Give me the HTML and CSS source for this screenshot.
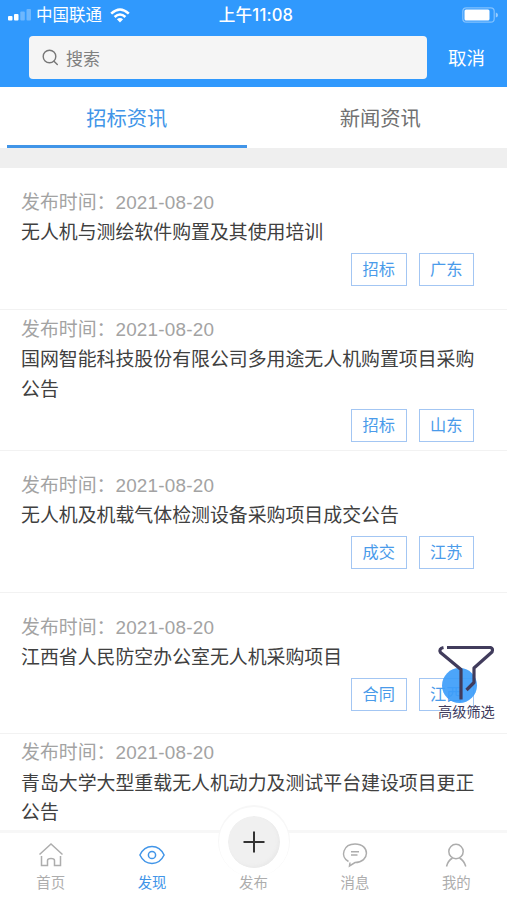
FILE: index.html
```html
<!DOCTYPE html>
<html lang="zh-CN">
<head>
  <meta charset="UTF-8">
  <meta name="viewport" content="width=device-width, initial-scale=1.0">
  <title>招标资讯</title>
  <link rel="stylesheet" href="styles.css">
</head>
<body>
  <div class="app">
    <header class="header">
      <!-- Status bar -->
      <div class="status">
        <div class="status-left">
          <svg class="signal" width="24" height="12" viewBox="0 0 24 12" fill="#fff">
            <rect x="0" y="7" width="4.5" height="4.5" rx="1"/>
            <rect x="6" y="5" width="4.5" height="6.5" rx="1"/>
            <rect x="12.3" y="2.5" width="4.5" height="9" rx="1" opacity=".3"/>
            <rect x="18.5" y="0" width="4.5" height="11.5" rx="1" opacity=".3"/>
          </svg>
          <span class="carrier">中国联通</span>
          <svg class="wifi" width="20" height="15" viewBox="0 0 20 15" fill="none" stroke="#fff" stroke-width="2.6">
            <path d="M1.2 5.6Q10-2.6 18.8 5.6"/>
            <path d="M4.6 9Q10 4 15.4 9"/>
            <path d="M10 14.4L6.9 11.2Q10 8.6 13.1 11.2Z" fill="#fff" stroke="none"/>
          </svg>
        </div>
        <div class="clock">上午11:08</div>
        <svg class="battery" width="37" height="16" viewBox="0 0 37 16">
          <rect x=".8" y=".8" width="31.4" height="14.4" rx="3.5" fill="none" stroke="#fff" stroke-opacity=".4" stroke-width="1.2"/>
          <rect x="2.5" y="2.5" width="25" height="11" rx="1.5" fill="#fff"/>
          <path d="M33.8 5.5Q36 6 36 8T33.8 10.5Z" fill="#fff" opacity=".5"/>
        </svg>
      </div>
      <!-- Search -->
      <div class="search-row">
        <div class="search">
          <svg width="17" height="17" viewBox="0 0 17 17" fill="none" stroke="#777" stroke-width="1.4" stroke-linecap="round">
            <circle cx="7.5" cy="7.5" r="6.3"/>
            <path d="M12 12.2L15.3 15.5"/>
          </svg>
          <span>搜索</span>
        </div>
        <span class="cancel">取消</span>
      </div>
    </header>

    <nav class="tabs">
      <div class="tab active">招标资讯</div>
      <div class="tab">新闻资讯</div>
    </nav>

    <main class="list">
      <article class="item">
        <div class="date">发布时间：<span>2021-08-20</span></div>
        <div class="title">无人机与测绘软件购置及其使用培训</div>
        <div class="tags"><span class="tag">招标</span><span class="tag">广东</span></div>
      </article>
      <article class="item">
        <div class="date">发布时间：<span>2021-08-20</span></div>
        <div class="title">国网智能科技股份有限公司多用途无人机购置项目采购公告</div>
        <div class="tags"><span class="tag">招标</span><span class="tag">山东</span></div>
      </article>
      <article class="item">
        <div class="date">发布时间：<span>2021-08-20</span></div>
        <div class="title">无人机及机载气体检测设备采购项目成交公告</div>
        <div class="tags"><span class="tag">成交</span><span class="tag">江苏</span></div>
      </article>
      <article class="item">
        <div class="date">发布时间：<span>2021-08-20</span></div>
        <div class="title">江西省人民防空办公室无人机采购项目</div>
        <div class="tags"><span class="tag">合同</span><span class="tag">江西</span></div>
      </article>
      <article class="item">
        <div class="date">发布时间：<span>2021-08-20</span></div>
        <div class="title">青岛大学大型重载无人机动力及测试平台建设项目更正公告</div>
      </article>
    </main>

    <!-- Floating filter button -->
    <div class="filter">
      <svg width="60" height="60" viewBox="0 0 60 60">
        <circle cx="22.5" cy="41.5" r="17.5" fill="#3d9dfa" fill-opacity=".92"/>
        <g fill="none" stroke="#413c5c" stroke-width="3.2" stroke-linejoin="round">
          <path d="M10 3.5H53.5Q56.500 4.500 55 8L37 24V38.500L29.500 46"/>
          <path d="M6.500 3.500Q1.500 4.500 3.500 8.500L24 25.500V55.500"/>
        </g>
      </svg>
      <span>高级筛选</span>
    </div>

    <!-- Bottom navigation -->
    <footer class="tabbar">
      <div class="nav">
        <svg width="26" height="26" viewBox="0 0 26 26">
          <path d="M1.500 12.500L13 2L24.500 12.500M3.500 14V23.500H9.500V18.500Q9.500 16.500 13 16.500T16.500 18.500V23.500H22.500V14"/>
        </svg>
        <span>首页</span>
      </div>
      <div class="nav active">
        <svg width="26" height="26" viewBox="0 0 26 26">
          <path d="M.9 13Q5 4.500 13 4.500T25.100 13Q21 21.500 13 21.500T.9 13Z"/>
          <circle cx="13" cy="13" r="3.600"/>
        </svg>
        <span>发现</span>
      </div>
      <div class="nav publish">
        <div class="plus">
          <svg width="22" height="22" viewBox="0 0 22 22"><path d="M11 .5V21.500M.5 11H21.500"/></svg>
        </div>
        <span>发布</span>
      </div>
      <div class="nav">
        <svg width="26" height="26" viewBox="0 0 26 26">
          <path d="M6.500 19.500C-2.500 14.500 1.500 2 13 2C28.500 2 28 20.500 13 20.500L7.500 24L8 20.500M9 9.800H17M9 13H15.500"/>
        </svg>
        <span>消息</span>
      </div>
      <div class="nav">
        <svg width="26" height="26" viewBox="0 0 26 26">
          <circle cx="13" cy="9.500" r="7.200"/>
          <path d="M3.500 24.500Q5 18.500 9.500 16M16.500 16Q21 18.500 22.800 24.500"/>
        </svg>
        <span>我的</span>
      </div>
    </footer>
  </div>
</body>
</html>
```
FILE: styles.css
```css
* {
  box-sizing: border-box;
}

body {
  margin: 0;
  font-family: "Liberation Sans", "Noto Sans CJK SC", sans-serif;
  background-color: #fff;
  color: #404040;
}

svg {
  display: block;
  flex-shrink: 0;
}

.app {
  position: relative;
  display: flex;
  flex-direction: column;
  height: 900px;
  overflow: hidden;
}

/* Header */
.header {
  flex: 0 0 87px;
  background-color: #3099fd;
  color: #fff;
}

.status {
  display: grid;
  grid-template-columns: 1fr auto 1fr;
  align-items: center;
  height: 30px;
  padding: 0 8px;
  font-size: 16.5px;
  line-height: 28px;
}

.status-left {
  display: flex;
  align-items: center;
}

.carrier {
  margin: 0 8px 0 4px;
}

.clock {
  padding-left: 5px;
  font-family: Inter, "Noto Sans CJK SC", sans-serif;
  font-size: 16.6px;
  font-weight: 500;
  letter-spacing: 0.2px;
}

.battery {
  justify-self: end;
}

.search-row {
  display: flex;
  align-items: center;
  padding: 6px 0 0 29px;
}

.search {
  display: flex;
  align-items: center;
  gap: 7px;
  width: 398px;
  height: 43px;
  padding: 0 0 1px 13px;
  border-radius: 4px;
  background-color: #f5f5f5;
  color: #808080;
  font-size: 17px;
}

.cancel {
  margin: -2px 0 0 21px;
  font-size: 18.5px;
}

/* Tabs */
.tabs {
  display: flex;
  flex: 0 0 81px;
  border-bottom: 20px solid #efefef;
}

.tab {
  flex: 1;
  margin: 0 7px;
  padding-top: 7px;
  border-bottom: 3px solid transparent;
  color: #707070;
  font-size: 20.3px;
  line-height: 51px;
  text-align: center;
}

.tab.active {
  border-bottom-color: #4195e8;
  color: #4195e8;
}

/* List */
.list {
  flex: 1;
  min-height: 0;
  overflow: hidden;
}

.item {
  display: flex;
  flex-direction: column;
  justify-content: center;
  height: 141.6px;
  padding: 3px 33px 0 21px;
  border-bottom: 1px solid #f2f2f2;
  font-size: 18.9px;
  line-height: 29.6px;
}

.item:last-child {
  justify-content: flex-start;
  padding-top: 4px;
}

.date {
  color: #a3a3a3;
  line-height: 30.4px;
}

.date span {
  letter-spacing: 0.2px;
}

.title {
  margin-right: -1px;
}

.tags {
  display: flex;
  justify-content: flex-end;
  gap: 12px;
  margin: 5px 0 6px;
}

.tag {
  width: 55.5px;
  height: 33px;
  border: 1px solid #a3c6f3;
  color: #4a9bea;
  font-size: 16.2px;
  line-height: 31px;
  text-align: center;
}

/* Filter button */
.filter {
  position: absolute;
  top: 644px;
  left: 437px;
  width: 60px;
  color: #413c5c;
  font-size: 14.2px;
  line-height: 18px;
}

.filter span {
  display: block;
  margin: -1px 0 0 1px;
  white-space: nowrap;
}

/* Bottom navigation */
.tabbar {
  position: relative;
  display: flex;
  flex: 0 0 70px;
  border-top: 3px solid #f7f7f7;
  background-color: #fff;
}

.nav {
  display: flex;
  flex: 1;
  flex-direction: column;
  align-items: center;
  padding-top: 9px;
  color: #adadad;
  font-size: 14.4px;
  line-height: 20px;
}

.nav svg {
  fill: none;
  stroke: currentColor;
  stroke-width: 1.5;
}

.nav span {
  margin-top: 5px;
}

.nav.active {
  color: #4195e8;
}

.publish {
  padding-top: 0;
}

.plus {
  display: flex;
  align-items: center;
  justify-content: center;
  width: 70px;
  height: 70px;
  margin-top: -26px;
  margin-bottom: -9px;
  border: 9px solid #fff;
  border-radius: 50%;
  background-color: #f0f0f0;
  background-clip: padding-box;
  box-shadow: 0 -1px 0 1px #f7f7f7, inset -2px -2px 3px #eaeaea;
  color: #333;
}

.plus svg {
  stroke-width: 2;
}
```
